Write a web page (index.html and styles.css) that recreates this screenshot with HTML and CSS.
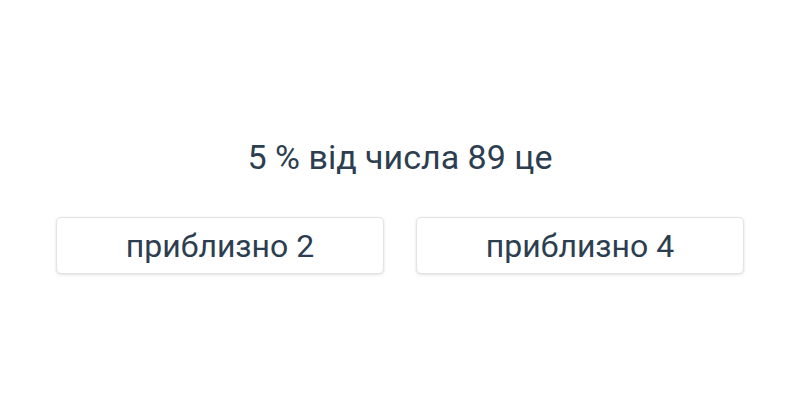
FILE: index.html
```html
<!DOCTYPE html>
<html lang="uk">
<head>
<meta charset="utf-8">
<link rel="stylesheet" href="styles.css">
</head>
<body>
<main class="quiz">
  <p class="question">5 % від числа 89 це</p>
  <div class="answers">
    <button class="answer">приблизно 2</button>
    <button class="answer">приблизно 4</button>
  </div>
</main>
</body>
</html>
```

FILE: styles.css
```css
html, body {
  margin: 0;
  padding: 0;
  background: #ffffff;
}
body {
  width: 800px;
  height: 400px;
  font-family: Roboto, "Noto Sans", sans-serif;
  color: #2c3e50;
}
.quiz {
  padding: 137px 56px 0;
}
.question {
  margin: 0 0 40px;
  text-align: center;
  font-size: 34px;
  line-height: 40px;
}
.answers {
  display: grid;
  grid-template-columns: 1fr 1fr;
  column-gap: 32px;
}
.answer {
  height: 57px;
  margin: 0;
  padding: 0;
  background: #ffffff;
  border: 1px solid #e3e3e3;
  border-radius: 5px;
  box-shadow: 0 1px 3px rgba(0, 0, 0, 0.12);
  font-family: Roboto, "Noto Sans", sans-serif;
  font-size: 32px;
  color: #2c3e50;
  text-align: center;
}
```
